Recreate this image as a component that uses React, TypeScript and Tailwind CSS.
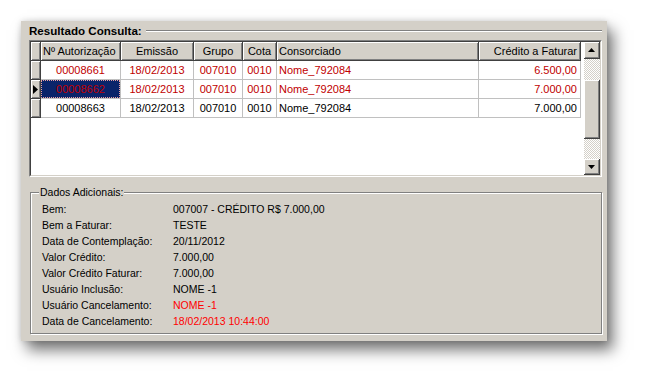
import React from "react";

const RED = "text-[#c00000]";

const cols = [
  { w: "w-[80px]", h: "Nº Autorização", ha: "justify-start pl-[2px]", da: "justify-center" },
  { w: "w-[73px]", h: "Emissão", ha: "justify-center", da: "justify-center" },
  { w: "w-[49px]", h: "Grupo", ha: "justify-center", da: "justify-center" },
  { w: "w-[34px]", h: "Cota", ha: "justify-center", da: "justify-center" },
  { w: "w-[202px]", h: "Consorciado", ha: "justify-start pl-[2px]", da: "justify-start pl-[2px]" },
  { w: "w-[102px]", h: "Crédito a Faturar", ha: "justify-end pr-[3px]", da: "justify-end pr-[3px]" },
];

const rows = [
  { v: ["00008661", "18/02/2013", "007010", "0010", "Nome_792084", "6.500,00"], red: true, sel: false },
  { v: ["00008662", "18/02/2013", "007010", "0010", "Nome_792084", "7.000,00"], red: true, sel: true },
  { v: ["00008663", "18/02/2013", "007010", "0010", "Nome_792084", "7.000,00"], red: false, sel: false },
];

const details: { l: string; v: string; red?: boolean }[] = [
  { l: "Bem:", v: "007007 - CRÉDITO R$ 7.000,00" },
  { l: "Bem a Faturar:", v: "TESTE" },
  { l: "Data de Contemplação:", v: "20/11/2012" },
  { l: "Valor Crédito:", v: "7.000,00" },
  { l: "Valor Crédito Faturar:", v: "7.000,00" },
  { l: "Usuário Inclusão:", v: "NOME -1" },
  { l: "Usuário Cancelamento:", v: "NOME -1", red: true },
  { l: "Data de Cancelamento:", v: "18/02/2013 10:44:00", red: true },
];

const btn3d =
  "bg-[#d4d0c8] border-r border-b border-[#404040] shadow-[inset_1px_1px_0_#ffffff,inset_-1px_-1px_0_#808080]";

function Indicator({ arrow }: { arrow?: boolean }) {
  return (
    <div className={`w-[10px] h-[19px] shrink-0 flex items-center justify-center ${btn3d}`}>
      {arrow && (
        <svg width="5" height="9" viewBox="0 0 5 9">
          <path d="M0 0 L5 4.5 L0 9 Z" fill="#000" />
        </svg>
      )}
    </div>
  );
}

function ScrollBtn({ up, h }: { up?: boolean; h: string }) {
  return (
    <div
      className={`w-[16px] ${h} shrink-0 flex items-center justify-center bg-[#d4d0c8] border-r border-b border-[#404040] shadow-[inset_1px_1px_0_#ffffff,inset_-1px_-1px_0_#808080]`}
    >
      <svg width="7" height="4" viewBox="0 0 7 4">
        {up ? <path d="M3.5 0 L7 4 L0 4 Z" fill="#000" /> : <path d="M0 0 L7 0 L3.5 4 Z" fill="#000" />}
      </svg>
    </div>
  );
}

export default function App() {
  return (
    <div
      className="w-[649px] h-[383px] bg-white pt-[21px] pl-[21px] text-black"
      style={{ fontFamily: '"Liberation Sans", Arial, sans-serif' }}
    >
      <div className="w-[586px] h-[320px] bg-[#d4d0c8] flex flex-col pl-[8px] shadow-[6px_9px_14px_rgba(0,0,0,0.55),0_0_6px_rgba(0,0,0,0.15)]">
        {/* title */}
        <div className="h-[19px] w-[573px] flex items-center">
          <span className="font-bold text-[11.6px] leading-[14px] whitespace-nowrap">Resultado Consulta:</span>
          <div className="flex-1 ml-[4px] h-[2px] border-t border-[#808080] border-b border-b-white" />
        </div>

        {/* grid */}
        <div className="w-[573px] h-[137px] border border-t-[#808080] border-l-[#808080] border-r-white border-b-white">
          <div className="w-full h-full border border-t-[#404040] border-l-[#404040] border-r-[#d4d0c8] border-b-[#d4d0c8] bg-white flex">
            <div className="flex flex-col w-[553px] text-[11px] leading-[13px]">
              {/* header */}
              <div className="flex h-[19px]">
                <Indicator />
                {cols.map((c) => (
                  <div key={c.h} className={`${c.w} h-[19px] shrink-0 flex items-center whitespace-nowrap ${c.ha} ${btn3d}`}>
                    {c.h}
                  </div>
                ))}
              </div>
              {rows.map((r, i) => (
                <div key={i} className="flex h-[19px]">
                  <Indicator arrow={r.sel} />
                  {cols.map((c, j) => {
                    const sel = r.sel && j === 0;
                    return (
                      <div
                        key={j}
                        className={`${c.w} h-[19px] shrink-0 flex items-center whitespace-nowrap border-r border-b border-[#c0c0c0] ${c.da} ${
                          r.red ? RED : "text-black"
                        } ${sel ? "bg-[#0a246a]" : ""}`}
                      >
                        {sel ? (
                          <div className="w-full h-full flex items-center justify-center outline outline-1 outline-dotted outline-[#e8a0a0] -outline-offset-1">
                            {r.v[j]}
                          </div>
                        ) : (
                          r.v[j]
                        )}
                      </div>
                    );
                  })}
                </div>
              ))}
            </div>
            <div className="w-[16px] ml-[3px] flex flex-col">
              <ScrollBtn up h="h-[17px]" />
              <div className="h-[21px] bg-[repeating-conic-gradient(#d4d0c8_0_25%,#ffffff_0_50%)] bg-[length:2px_2px]" />
              <div className={`h-[59px] ${btn3d}`} />
              <div className="h-[20px] bg-[repeating-conic-gradient(#d4d0c8_0_25%,#ffffff_0_50%)] bg-[length:2px_2px]" />
              <ScrollBtn h="h-[16px]" />
            </div>
          </div>
        </div>

        {/* dados adicionais */}
        <fieldset className="mt-[9px] ml-[1px] w-[572px] h-[148px] border border-[#808080] shadow-[inset_1px_1px_0_#ffffff,1px_1px_0_#ffffff] pl-[11px] pt-[3px]">
          <legend className="ml-[-3px] px-[1px] text-[10.5px] leading-[13px] bg-[#d4d0c8]">Dados Adicionais:</legend>
          <div className="flex flex-col text-[10.5px]">
            {details.map((d) => (
              <div key={d.l} className="flex h-[16px] items-center whitespace-nowrap">
                <div className="w-[131px]">{d.l}</div>
                <div className={d.red ? "text-[#ff0000]" : ""}>{d.v}</div>
              </div>
            ))}
          </div>
        </fieldset>
      </div>
    </div>
  );
}
